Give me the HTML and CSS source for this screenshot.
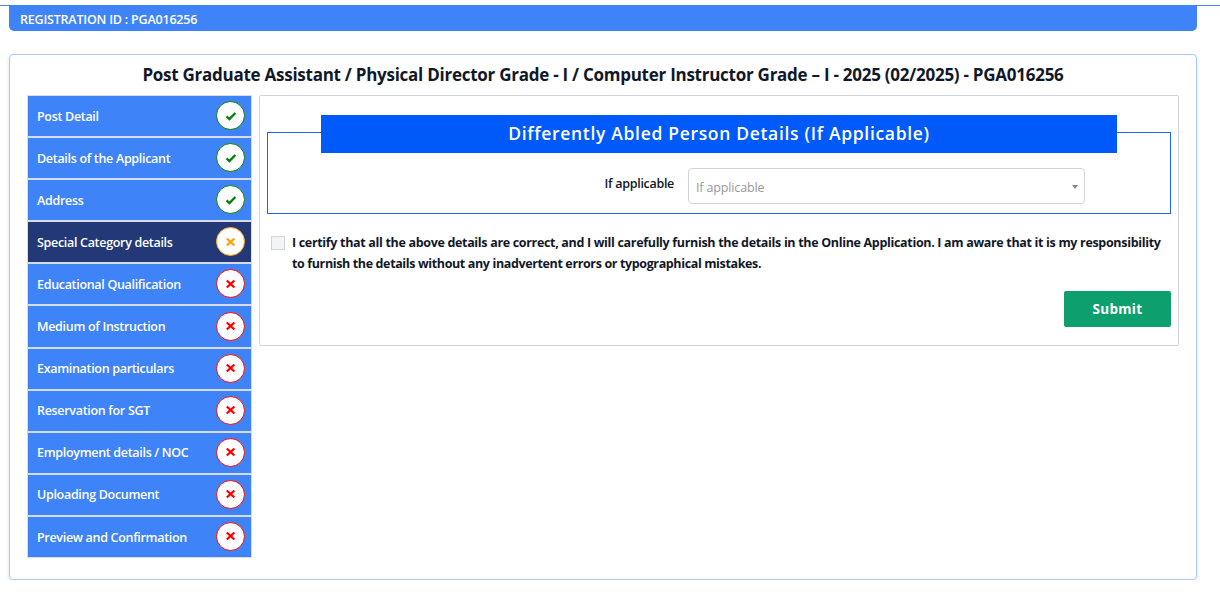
FILE: index.html
```html
<!DOCTYPE html>
<html lang="en">
<head>
<meta charset="utf-8">
<title>Special Category details</title>
<link rel="stylesheet" href="styles.css">
</head>
<body>
  <svg width="0" height="0" class="symbols">
    <symbol id="check" viewBox="0 0 12 12"><path d="M1.6 6.4 L4.4 9.1 L10.4 3"/></symbol>
    <symbol id="cross" viewBox="0 0 12 12"><path d="M1.8 2.5 L9.4 9.5 M9.4 2.5 L1.8 9.5"/></symbol>
  </svg>

  <header class="topline">
    <div class="reg-bar"><span>REGISTRATION ID : PGA016256</span></div>
  </header>

  <main class="card">
    <h1>Post Graduate Assistant / Physical Director Grade - I / Computer Instructor Grade – I - 2025 (02/2025) - PGA016256</h1>
    <div class="columns">
      <ul class="steps">
        <li class="step done"><span>Post Detail</span><i><svg><use href="#check"/></svg></i></li>
        <li class="step done"><span>Details of the Applicant</span><i><svg><use href="#check"/></svg></i></li>
        <li class="step done"><span>Address</span><i><svg><use href="#check"/></svg></i></li>
        <li class="step active"><span>Special Category details</span><i><svg><use href="#cross"/></svg></i></li>
        <li class="step"><span>Educational Qualification</span><i><svg><use href="#cross"/></svg></i></li>
        <li class="step"><span>Medium of Instruction</span><i><svg><use href="#cross"/></svg></i></li>
        <li class="step"><span>Examination particulars</span><i><svg><use href="#cross"/></svg></i></li>
        <li class="step"><span>Reservation for SGT</span><i><svg><use href="#cross"/></svg></i></li>
        <li class="step"><span>Employment details / NOC</span><i><svg><use href="#cross"/></svg></i></li>
        <li class="step"><span>Uploading Document</span><i><svg><use href="#cross"/></svg></i></li>
        <li class="step"><span>Preview and Confirmation</span><i><svg><use href="#cross"/></svg></i></li>
      </ul>

      <form class="panel">
        <fieldset>
          <legend><span>Differently Abled Person Details (If Applicable)</span></legend>
          <div class="field">
            <label><span>If applicable</span></label>
            <div class="select"><span>If applicable</span><b></b></div>
          </div>
        </fieldset>
        <div class="certify">
          <div class="checkbox"></div>
          <p><span class="line">I certify that all the above details are correct, and I will carefully furnish the details in the Online Application. I am aware that it is my responsibility</span> <span class="line last">to furnish the details without any inadvertent errors or typographical mistakes.</span></p>
        </div>
        <button type="button"><span>Submit</span></button>
      </form>
    </div>
  </main>
</body>
</html>
```
FILE: styles.css
```css
* { box-sizing: border-box; }
body {
  margin: 0; background: #fff; color: #111827; overflow: hidden;
  font: 600 12.5px/18px "Open Sans", "Noto Sans", sans-serif;
}
.symbols { position: absolute; }

.topline { margin-top: 5px; border-top: 1px solid #3f83f8; padding: 0 23px 0 9px; }
.reg-bar {
  height: 25px; padding: 5px 11px 0; background: #3f83f8; color: #fff;
  border-radius: 0 0 5px 5px; letter-spacing: -0.2px;
}

.card {
  margin: 23px 23px 0 9px; height: 526px; padding: 0 17px;
  border: 1px solid #a4cafe; border-radius: 4px;
  box-shadow: 0 2px 4px rgba(0,0,0,.12);
}
h1 {
  margin: 0; height: 40px; padding-top: 8px; text-align: center; white-space: nowrap;
  font-size: 17px; line-height: 24px; font-weight: 700; letter-spacing: -0.26px;
}
.columns { display: flex; gap: 7px; align-items: flex-start; }

.steps { list-style: none; margin: 0; padding: 0; width: 225px; }
.step {
  display: flex; align-items: center; justify-content: space-between;
  height: 42.1px; padding: 0 6px 0 9px; border: 1px solid #d9dde3;
  background: #3f83f8; color: #fff; letter-spacing: -0.31px;
}
.step span { padding-top: 1.2px; }
.step i {
  display: flex; align-items: center; justify-content: center;
  width: 29px; height: 29px; border: 1px solid #f00; border-radius: 50%;
  background: #fff; color: #f00; margin-top: -1px;
}
.step svg { width: 12px; height: 12px; fill: none; stroke: currentColor; stroke-width: 2.3; }
.step.done i { border-color: #008000; color: #008000; }
.step.active { background: #233876; }
.step.active i { border-color: #ffa500; color: #ffa500; }

.panel { width: 920px; height: 251px; padding: 19px 7px 0; border: 1px solid #d1d5db; border-radius: 2px; }
fieldset { margin: 0; padding: 0; min-width: 0; height: 99px; border: 1px solid #1c64f2; }
/* the title block hangs 4px lower than the legend so the border meets it above centre */
legend { width: 796px; height: 34px; margin: 0 auto; padding: 0; }
legend span {
  display: block; height: 38px; text-align: center;
  background: #005af9; color: #fff; font-size: 17.5px; line-height: 37px; letter-spacing: .68px;
}
.field { display: flex; padding: 19px 85px 0 0; justify-content: flex-end; }
label { padding-top: 7px; margin-right: 14px; font-weight: 600; letter-spacing: -0.3px; }
.select {
  display: flex; align-items: center; justify-content: space-between;
  width: 397px; height: 36px; padding: 3px 6px 0 7px;
  border: 1px solid #d1d5db; border-radius: 4px; color: #999; font-weight: 400; letter-spacing: -0.15px;
}
.select span { padding-top: 1px; }
.select b { margin-top: -2px; border: 3px solid transparent; border-top: 4px solid #888; border-bottom: 0; }

.certify { display: flex; padding: 18px 0 0 4px; }
.checkbox { width: 14px; height: 14px; margin-top: 4px; background: #f3f4f6; border: 1px solid #d1d5db; }
.certify p { margin: 0 0 0 7px; line-height: 21px; font-weight: 700; letter-spacing: -0.325px; white-space: nowrap; }
.line { display: table; }
.line.last { letter-spacing: -0.37px; }
button {
  display: block; margin: 17px 0 0 auto; width: 107px; height: 36px; padding: 0;
  border: 0; border-radius: 2px; background: #0e9f6e; color: #fff;
  font: 700 13.5px/36px "Open Sans", "Noto Sans", sans-serif; letter-spacing: .3px;
}
```
